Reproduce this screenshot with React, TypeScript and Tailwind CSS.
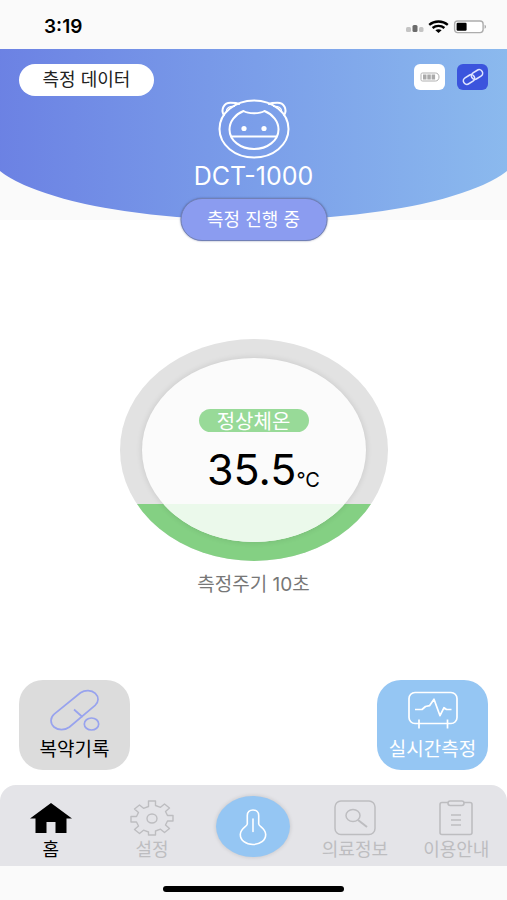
import type { ReactNode } from 'react';

function StatusBar() {
  return (
    <div className="flex h-[49px] items-center justify-between bg-[#fafafa] pl-11 pr-5 pt-1">
      <span className="text-[19px] font-semibold leading-6 text-black">3:19</span>
      <div className="flex items-center gap-1">
        <svg width="18" height="14" viewBox="0 0 18 14" aria-hidden="true">
          <rect x="0" y="7" width="5" height="5" rx="1.5" fill="#c4c4c4" />
          <rect x="6.5" y="5" width="5" height="7" rx="1.5" fill="#6b6b6b" />
          <rect x="13" y="7" width="4.5" height="5" rx="1.5" fill="#c4c4c4" />
        </svg>
        <svg width="21" height="14" viewBox="0 0 21 14" fill="none" stroke="#000" strokeWidth="2.4" aria-hidden="true">
          <path d="M1.2 4.8C6.4 .4 14.6 .4 19.8 4.8" />
          <path d="M4.6 8C8 5.2 13 5.2 16.4 8" />
          <path d="M7.4 10.2c1.8-1.4 4.4-1.4 6.2 0L10.5 13z" fill="#000" stroke="none" />
        </svg>
        <svg width="34" height="14" viewBox="0 0 34 14" aria-hidden="true">
          <rect x="1.6" y="1" width="28.5" height="11.6" rx="3" fill="#fff" stroke="#adadad" strokeWidth="1.4" />
          <rect x="3.6" y="2.8" width="10" height="8" rx="1.2" fill="#000" />
          <path d="M31.6 4.8c1.8.8 1.8 3.2 0 4z" fill="#a0a0a0" />
        </svg>
      </div>
    </div>
  );
}

function BearLogo() {
  return (
    <svg width="72" height="60" viewBox="0 0 72 60" fill="none" stroke="#fff" strokeWidth="2" strokeLinecap="round" strokeLinejoin="round" aria-hidden="true">
      <ellipse cx="36" cy="30" rx="34.5" ry="28.5" />
      <path d="M5.8 16C2.500 10 6 3.800 12.500 3.800c3.500 0 6.500.2 8.500 1.200" />
      <path d="M66.200 16C69.500 10 66 3.800 59.500 3.800c-3.500 0-6.500.2-8.500 1.200" />
      <path d="M8.200 13c0-4 3-6 8.300-5.500M63.800 13c0-4-3-6-8.300-5.500" strokeWidth="1.200" />
      <path d="M25.500 12C17 15.500 11.500 22.500 11.500 30.500c0 11 11 19.500 24.500 19.500s24.500-8.500 24.500-19.500c0-8-5.500-15-14-18.500-2.500 1.500-6.500 2.200-10.500 2.200s-8-.7-10.500-2.200z" />
      <path d="M14 37.500h44" />
      <circle cx="26" cy="29.500" r="2.600" fill="#fff" stroke="none" />
      <circle cx="46" cy="29.500" r="2.600" fill="#fff" stroke="none" />
    </svg>
  );
}

function Header() {
  return (
    <header className="relative h-[171px] bg-[#fafafa]">
      <div className="absolute inset-0 overflow-hidden">
        <div className="absolute inset-y-0 -left-[3%] w-[106%] rounded-b-[50%_73px] bg-linear-to-r from-[#6b80e3] to-[#8cbbee]" />
      </div>

      <div className="relative flex flex-col items-center px-[19px] pt-[15px]">
        <div className="flex w-full items-start justify-between">
          <button type="button" className="h-8 w-[135px] rounded-full bg-white text-lg leading-6 text-[#222]">
            측정 데이터
          </button>
          <div className="flex gap-3">
            <button type="button" aria-label="배터리" className="flex h-[26px] w-[31px] items-center justify-center rounded-md bg-white">
              <svg width="20" height="10" viewBox="0 0 20 10" fill="none" aria-hidden="true">
                <path d="M2.5 1h13c2 0 3.500 1.500 3.500 4s-1.500 4-3.500 4h-13C1.500 9 1 8.500 1 7.500v-5C1 1.500 1.500 1 2.500 1z" stroke="#b0b0b0" />
                <path d="M3 2.500h3.500v5H3zM7.300 2.500h3.500v5H7.300zM11.600 2.500h3.500v5h-3.500z" fill="#aaa" />
              </svg>
            </button>
            <button type="button" aria-label="연결" className="flex h-[26px] w-[31px] items-center justify-center rounded-md bg-[#3b54dd]">
              <svg width="22" height="18" viewBox="0 0 22 18" fill="none" stroke="#dfe5ff" strokeWidth="1.600" aria-hidden="true">
                <rect x="-6" y="-3.500" width="12" height="7" rx="3.500" transform="translate(7 11.500) rotate(-32)" />
                <rect x="-6" y="-3.500" width="12" height="7" rx="3.500" transform="translate(15 6.500) rotate(-32)" />
              </svg>
            </button>
          </div>
        </div>
        <div className="flex flex-col items-center gap-px pt-[3px]">
          <BearLogo />
          <h1 className="text-[25px] leading-8 text-white">DCT-1000</h1>
        </div>
      </div>

      {/* Measuring state, hangs over the bottom of the header */}
      <button
        type="button"
        className="absolute -bottom-[21px] left-1/2 h-[43px] w-[147px] -translate-x-1/2 rounded-full border border-[#7180b5] bg-[#8b9cf0] text-lg leading-6 text-white shadow-[0_0_2px_rgba(60,70,120,0.6)]"
      >
        측정 진행 중
      </button>
    </header>
  );
}

function Gauge() {
  return (
    <div className="relative flex h-[222px] w-[268px] items-center justify-center overflow-hidden rounded-[50%] bg-[#e2e2e2]">
      <div className="absolute inset-x-0 bottom-0 h-[57px] bg-[#84d083]" />
      <div className="relative flex h-[184px] w-[224px] flex-col items-center overflow-hidden rounded-[50%] bg-[#fbfbfb] pt-[51px] shadow-[0_0_6px_rgba(0,0,0,0.12)]">
        <div className="absolute inset-x-0 bottom-0 h-[38px] bg-[#ebf9eb]" />
        <span className="relative flex h-[23px] w-[110px] items-center justify-center rounded-full bg-[#98da98] pt-0.5 text-xl leading-6 text-white">정상체온</span>
        <p className="relative mt-3 flex items-end pl-5 text-black">
          <span className="text-[43px] leading-[50px]">35.5</span>
          <span className="text-xl leading-7">°C</span>
        </p>
      </div>
    </div>
  );
}

function HomeIcon() {
  return (
    <svg width="42" height="34" viewBox="0 0 42 34" aria-hidden="true">
      <path d="M21 2L0 17.500h5.500V32h11V21h9v11h11V17.500H42z" fill="#000" />
    </svg>
  );
}

function GearIcon() {
  return (
    <svg width="44" height="36" viewBox="0 0 44 36" fill="none" stroke="#bdbdc0" strokeWidth="1.400" strokeLinejoin="round" aria-hidden="true">
      <path d="M18.500 1h7v4.500l5 1.800L34.500 4l5 4-4 3.500 2 4H43v5.500h-5.500l-2 4 4 3.500-5 4-4-3.300-5 1.800V35h-7v-3l-5-1.800-4 3.300-5-4 4-3.500-2-4H1v-5.500h5.500l2-4-4-3.500 5-4 4 3.300 5-1.800z" />
      <ellipse cx="22" cy="18.500" rx="5" ry="4.500" />
    </svg>
  );
}

function MedicalIcon() {
  return (
    <svg width="42" height="36" viewBox="0 0 42 36" fill="none" stroke="#bdbdc0" strokeWidth="1.500" aria-hidden="true">
      <rect x="1" y="1" width="40" height="33.500" rx="6" />
      <ellipse cx="19" cy="15.500" rx="7" ry="6" />
      <path d="M24 20l9 7" strokeWidth="2" />
    </svg>
  );
}

function GuideIcon() {
  return (
    <svg width="34" height="36" viewBox="0 0 34 36" fill="none" stroke="#bdbdc0" strokeWidth="1.600" aria-hidden="true">
      <path d="M9 2.500H3c-1.200 0-2 .8-2 2v28c0 1.200.8 2 2 2h28c1.200 0 2-.8 2-2v-28c0-1.200-.8-2-2-2h-6" />
      <rect x="9" y="1" width="16" height="4.500" rx="2.200" />
      <path d="M12 15h10M12 20h10M12 25h10" />
    </svg>
  );
}

function NavItem({ label, icon, active = false }: { label: string; icon: ReactNode; active?: boolean }) {
  return (
    <a href="#" className={`flex flex-col items-center gap-0.5 whitespace-nowrap text-lg leading-6 ${active ? 'text-black' : 'text-[#bdbdc0]'}`}>
      <span className="flex h-9 items-center">{icon}</span>
      {label}
    </a>
  );
}

export default function App() {
  return (
    <div className="flex min-h-screen flex-col bg-white font-['Inter','Noto_Sans_CJK_KR',sans-serif]">
      <StatusBar />
      <Header />

      <main className="flex flex-1 flex-col">
        <section className="flex flex-1 flex-col items-center justify-center gap-3 pt-9">
          <Gauge />
          <p className="text-[19px] leading-6 text-[#777]">측정주기 10초</p>
        </section>

        <div className="flex justify-between px-[19px] pb-[15px]">
          <button type="button" className="flex h-[90px] w-[111px] flex-col items-center rounded-3xl bg-[#dcdcdc] pt-2 text-[19px] leading-6 whitespace-nowrap text-black">
            <svg width="52" height="46" viewBox="0 0 52 46" fill="none" stroke="#98a3ee" strokeWidth="1.700" aria-hidden="true">
              <path d="M31.500 4.800c4.500-3.200 11-3 14.800.6 3.700 3.500 3.600 8.600-.2 12L20.500 39c-4.500 3.500-11.500 3.500-15.500 0-4-3.600-4-9.200.2-12.800z" />
              <path d="M25 21.500l8.500 7.500" />
              <ellipse cx="42.500" cy="36" rx="7.200" ry="6" fill="#dcdcdc" />
            </svg>
            <span className="mt-1">복약기록</span>
          </button>
          <button type="button" className="flex h-[90px] w-[111px] flex-col items-center rounded-3xl bg-[#95c6f3] pt-2 text-[19px] leading-6 whitespace-nowrap text-white">
            <svg width="52" height="46" viewBox="0 0 52 46" fill="none" stroke="#fff" strokeWidth="1.700" strokeLinejoin="round" aria-hidden="true">
              <rect x="2" y="4.500" width="48" height="31" rx="6" />
              <path d="M12 31.500v9M40.500 31.500v9" />
              <path d="M8 21.500h7l3.500-3 4-.8 4.500-6.500 6 16.500 4-8 2.500 1.800h5" />
            </svg>
            <span className="mt-1">실시간측정</span>
          </button>
        </div>
      </main>

      <nav className="grid h-[81px] grid-cols-5 justify-items-center rounded-t-2xl bg-[#e4e4e8] pt-[15px]">
        <NavItem label="홈" icon={<HomeIcon />} active />
        <NavItem label="설정" icon={<GearIcon />} />
        <button type="button" aria-label="체온 측정" className="-mt-1 flex h-[61px] w-[74px] items-center justify-center rounded-[50%] bg-[#95c6f3] shadow-[0_0_4px_rgba(0,0,0,0.15)]">
          <svg width="30" height="38" viewBox="0 0 30 38" fill="none" stroke="#fff" strokeWidth="1.600" strokeLinecap="round" aria-hidden="true">
            <path d="M9.300 16V7.500C9.300 4 11.800 2 15 2s5.700 2 5.700 5.500V16c.2 2.500 7 4.500 7 10.500 0 5.800-5.500 10-12.700 10S2.300 32.300 2.300 26.500c0-6 6.800-8 7-10.500z" />
            <path d="M15 11v12.500" />
          </svg>
        </button>
        <NavItem label="의료정보" icon={<MedicalIcon />} />
        <NavItem label="이용안내" icon={<GuideIcon />} />
      </nav>

      {/* Home indicator */}
      <div className="flex h-[34px] justify-center bg-[#fafafa] pt-5">
        <div className="h-[6px] w-[181px] rounded-full bg-black" />
      </div>
    </div>
  );
}
